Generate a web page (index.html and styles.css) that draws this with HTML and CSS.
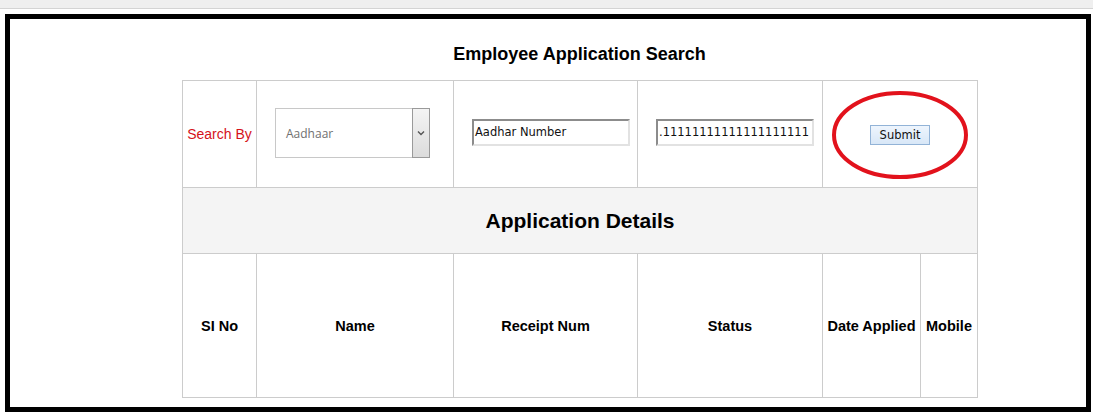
FILE: index.html
```html
<!DOCTYPE html>
<html>
<head>
<meta charset="utf-8">
<link rel="stylesheet" href="styles.css">
</head>
<body>
<div class="topbar"></div>
<div class="frame">
  <div class="content">
    <h1 class="title">Employee Application Search</h1>
    <table class="grid">
      <colgroup>
        <col class="c1"><col class="c2"><col class="c3"><col class="c4"><col class="c5"><col class="c6">
      </colgroup>
      <tr class="row-search">
        <td class="label">Search By</td>
        <td class="field">
          <div class="select">
            <span class="select-text">Aadhaar</span>
            <span class="select-btn">
              <svg width="8" height="6" viewBox="0 0 8 6"><path d="M1 1.5 L4 4.5 L7 1.5" fill="none" stroke="#555" stroke-width="1.4"/></svg>
            </span>
          </div>
        </td>
        <td class="field"><div class="textbox">Aadhar Number</div></td>
        <td class="field"><div class="textbox">.11111111111111111111</div></td>
        <td class="submit-cell" colspan="2">
          <div class="submit-wrap">
            <button class="submit">Submit</button>
            <svg class="ring" width="140" height="92" viewBox="0 0 140 92"><ellipse cx="70" cy="46" rx="66" ry="42" fill="none" stroke="#e2121c" stroke-width="4"/></svg>
          </div>
        </td>
      </tr>
      <tr class="row-title">
        <td colspan="6">Application Details</td>
      </tr>
      <tr class="row-head">
        <th>SI No</th>
        <th>Name</th>
        <th>Receipt Num</th>
        <th>Status</th>
        <th>Date Applied</th>
        <th>Mobile</th>
      </tr>
    </table>
  </div>
</div>
</body>
</html>
```

FILE: styles.css
```css
html, body {
  margin: 0;
  padding: 0;
  background: #ffffff;
  font-family: "Liberation Sans", Arial, sans-serif;
}
.topbar {
  height: 8px;
  background: #efefef;
  border-bottom: 1px solid #d4d4d4;
}
.frame {
  margin: 5px 2px 0 5px;
  border: 5px solid #000;
  height: 388px;
}
.content {
  margin-left: 172px;
  width: 795px;
}
.title {
  margin: 0;
  padding-top: 25px;
  height: 36px;
  line-height: 20px;
  font-size: 18px;
  font-weight: bold;
  text-align: center;
  color: #000;
}
.grid {
  width: 795px;
  table-layout: fixed;
  border-collapse: collapse;
}
.c1 { width: 74px; }
.c2 { width: 197px; }
.c3 { width: 184px; }
.c4 { width: 185px; }
.c5 { width: 98px; }
.c6 { width: 57px; }
.grid td, .grid th {
  border: 1px solid #cccccc;
  padding: 0;
  vertical-align: middle;
}
.row-search td { height: 106px; }
.label {
  text-align: center;
  color: #d5121a;
  font-size: 14px;
}
.field {
  padding-left: 18px !important;
}
.select {
  box-sizing: border-box;
  width: 155px;
  height: 50px;
  border: 1px solid #c8c8c8;
  display: flex;
  align-items: stretch;
  margin-bottom: 2px;
}
.select-text {
  flex: 1;
  display: flex;
  align-items: center;
  padding-left: 10px;
  font-family: "Open Sans", sans-serif;
  font-size: 12px;
  color: #707070;
}
.select-btn {
  width: 16px;
  border: 1px solid #9a9a9a;
  margin: -1px -1px -1px 0;
  background: linear-gradient(#f4f4f4, #dcdcdc);
  display: flex;
  align-items: center;
  justify-content: center;
}
.textbox {
  box-sizing: border-box;
  width: 158px;
  height: 27px;
  border-top: 2px solid #8c8c8c;
  border-left: 2px solid #8c8c8c;
  border-right: 2px solid #e2e2e2;
  border-bottom: 2px solid #e2e2e2;
  padding-left: 1px;
  font-family: "DejaVu Sans", sans-serif;
  font-size: 11.5px;
  line-height: 23px;
  color: #111;
  white-space: nowrap;
  overflow: hidden;
  margin-bottom: 3px;
}
.submit-cell {
  text-align: center;
}
.submit-wrap {
  position: relative;
  display: inline-block;
}
.submit {
  box-sizing: border-box;
  width: 60px;
  height: 20px;
  border: 1px solid #92b3d7;
  background: linear-gradient(#eef5fd, #d8e7f7);
  font-family: "DejaVu Sans", sans-serif;
  font-size: 11.5px;
  color: #111;
  padding: 0;
  margin-top: 2px;
  display: block;
}
.ring {
  position: absolute;
  left: -40px;
  top: -34px;
}
.row-title td {
  height: 65px;
  background: #f4f4f4;
  text-align: center;
  font-size: 21px;
  font-weight: bold;
  color: #000;
}
.row-head th {
  height: 143px;
  font-size: 14.5px;
  font-weight: bold;
  color: #000;
  text-align: center;
}
```
